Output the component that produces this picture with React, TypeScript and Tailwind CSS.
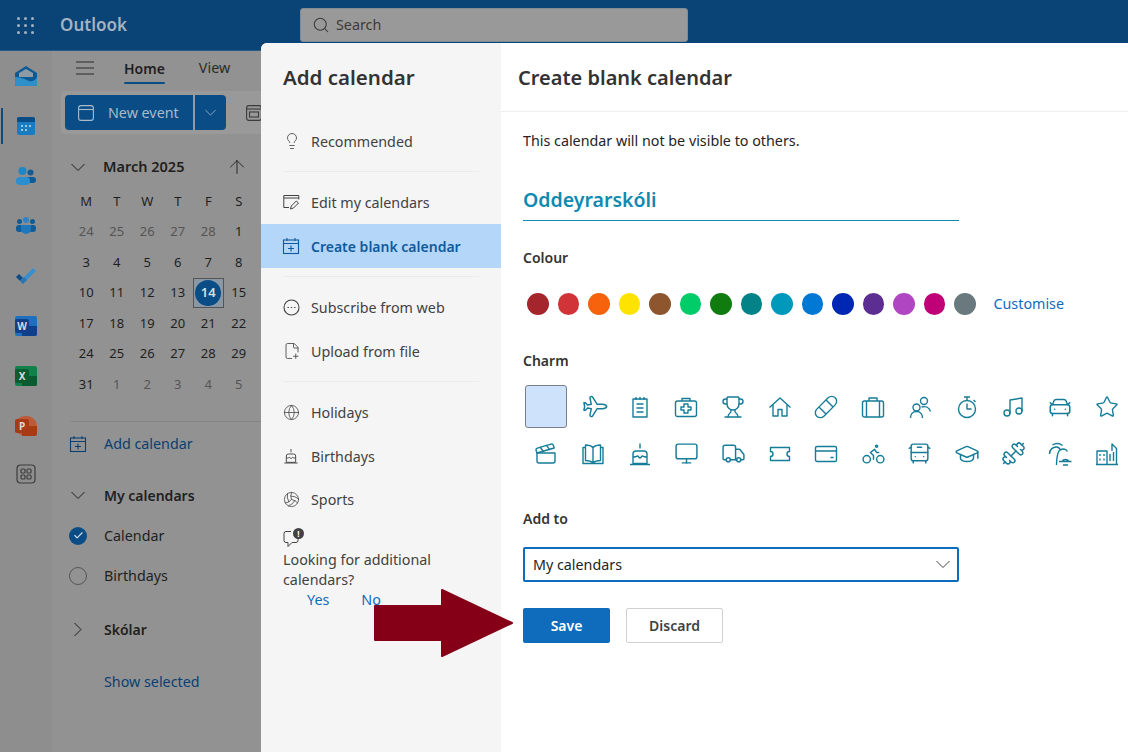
import {
  ArrowUp, Bike, BusFront, CarFront, Check, Clapperboard,
  Dumbbell, FilePlus2, Globe, GraduationCap, Lightbulb, Monitor, Music, Plane, Search, Star, Trophy, Truck,
  Volleyball,
} from "lucide-react";

const weeks = [
  ["24", "25", "26", "27", "28", "1", "2"],
  ["3", "4", "5", "6", "7", "8", "9"],
  ["10", "11", "12", "13", "14", "15", "16"],
  ["17", "18", "19", "20", "21", "22", "23"],
  ["24", "25", "26", "27", "28", "29", "30"],
  ["31", "1", "2", "3", "4", "5", "6"],
];

const colours = [
  "bg-[#a4262c]", "bg-[#d13438]", "bg-[#f7630c]", "bg-[#ffe300]", "bg-[#8e562e]",
  "bg-[#00cc6a]", "bg-[#107c10]", "bg-[#038387]", "bg-[#0099bc]", "bg-[#0078d4]",
  "bg-[#0027b4]", "bg-[#5c2e91]", "bg-[#b146c2]", "bg-[#bf0077]", "bg-[#69797e]",
];

// charm glyphs that lucide doesn't have in the right shape, 24x24 outlines
const charmPaths: Record<string, React.ReactNode> = {
  notepad: <path d="M5 4h14v18H5zM8 2v3M12 2v3M16 2v3M8.5 9h7M8.5 13h7M8.5 17h7" />,
  medkit: (
    <>
      <rect x="1.5" y="6" width="21" height="15.5" rx="2" />
      <path d="M8 6V3.5h8V6M10 9h4v3h3v3h-3v3h-4v-3H7v-3h3z" />
    </>
  ),
  house: <path d="M1.5 12.5L12 3l10.5 9.5M5 10v11h5v-6.5h4V21h5V10" />,
  bandage: (
    <g transform="rotate(-45 12 12)">
      <rect x="-1" y="7" width="26" height="10" rx="5" />
      <path d="M7 7v10M17 7v10M11 10.5h.1M13 10.5h.1M11 13.5h.1M13 13.5h.1" />
    </g>
  ),
  suitcase: (
    <>
      <rect x="1.5" y="6" width="21" height="16" rx="2" />
      <path d="M8 6V3h8v3M5.5 6v16M18.5 6v16" />
    </>
  ),
  people: (
    <>
      <circle cx="16" cy="6" r="3.5" />
      <circle cx="8.5" cy="12.5" r="3.5" />
      <path d="M2.5 23c0-3.5 2-6.5 6-6.5s6 3 6 6.5M13.5 12c3.5-1 7.5 0 9 4.5" />
    </>
  ),
  timer: (
    <>
      <circle cx="12" cy="14" r="8.5" />
      <path d="M12 8.5V14h4.5M9 2h6M12 2v3.5M18.5 5l2 2" />
    </>
  ),
  book: (
    <>
      <path d="M12 5.5C10 3.5 7 3 4.5 3v15.5c3 0 5.5.5 7.5 2.5 2-2 4.5-2.5 7.5-2.5V3C17 3 14 3.5 12 5.5zM12 5.5V21" />
      <path d="M4.5 5.5H2V21.5h20V5.5h-2.5" />
    </>
  ),
  cake: <path d="M12 1.5v5M5 12a3 3 0 0 1 3-3h8a3 3 0 0 1 3 3v9.5H5zM5 14c2 2.5 3.5 0 4.5 0s1.5 2 2.5 2 1.500-2 2.500-2 2.500 2.500 4.500 0M2 22.500h20" />,
  ticket: <path d="M2.5 5.5h19v4a2.5 2.5 0 0 0 0 5v4h-19v-4a2.5 2.5 0 0 0 0-5z" />,
  card: (
    <>
      <rect x="1.5" y="4.5" width="21" height="15" rx="1.5" />
      <path d="M1.5 9h21M16.5 15.5h3" />
    </>
  ),
  palm: <path d="M8.5 23c0-6 .5-11 3-15M1.5 12c0-4.5 3.5-7.5 7.5-7 2 .3 3 1.5 3.5 3.5M4.5 3c3-2.2 7.5-2 10 .5M12 8c3-1.5 6-1 7.5 1.5M11 19.500h12.500M14 19.500a4 4 0 0 1 7 0M15 23h5" />,
  city: <path d="M2 22.5V9h10v13.5M12 22.5h9.5V6.500L17 2v7M5 12v2M9 12v2M5 16.500v2M9 16.500v2M15 12v7M18.500 10v9M1 22.500h22" />,
};

function Drawn({ name }: { name: string }) {
  return (
    <svg width="24" height="24" viewBox="0 0 24 24" fill="none" stroke="currentColor" strokeWidth="1.4" strokeLinejoin="round">
      {charmPaths[name]}
    </svg>
  );
}

function ChevronWide({ width, className }: { width: number; className?: string }) {
  return (
    <svg width={width} height={width / 2 + 2} viewBox="0 0 14 9" fill="none" stroke="currentColor" strokeWidth="1" className={className}>
      <path d="M.5 1L7 7.500 13.500 1" />
    </svg>
  );
}

const charms: React.ReactNode[] = [
  <Plane size={25} strokeWidth={1.4} className="rotate-45" />,
  <Drawn name="notepad" />,
  <Drawn name="medkit" />,
  <Trophy size={24} strokeWidth={1.4} />,
  <Drawn name="house" />,
  <Drawn name="bandage" />,
  <Drawn name="suitcase" />,
  <Drawn name="people" />,
  <Drawn name="timer" />,
  <Music size={24} strokeWidth={1.4} />,
  <CarFront size={26} strokeWidth={1.4} />,
  <Star size={24} strokeWidth={1.4} />,
  <Clapperboard size={24} strokeWidth={1.4} />,
  <Drawn name="book" />,
  <Drawn name="cake" />,
  <Monitor size={25} strokeWidth={1.4} />,
  <Truck size={25} strokeWidth={1.4} />,
  <Drawn name="ticket" />,
  <Drawn name="card" />,
  <Bike size={25} strokeWidth={1.4} />,
  <BusFront size={25} strokeWidth={1.4} />,
  <GraduationCap size={26} strokeWidth={1.4} />,
  <Dumbbell size={25} strokeWidth={1.4} />,
  <Drawn name="palm" />,
  <Drawn name="city" />,
];

function CalendarPlusIcon({ className }: { className?: string }) {
  return (
    <svg width="18" height="18" viewBox="0 0 18 18" fill="none" stroke="currentColor" strokeWidth="1.1" className={className}>
      <rect x="1.5" y="3" width="15" height="13.5" />
      <path d="M1.5 6.5h15M5 1v3M13 1v3M9 8.5v6M6 11.5h6" />
    </svg>
  );
}

function EditCalendarIcon() {
  return (
    <svg width="17" height="16" viewBox="0 0 17 16" fill="none" stroke="currentColor" strokeWidth="1">
      <path d="M6 13.5H.8V1.5h15v4M.8 4h15" />
      <path d="M7.5 15l.8-3 5-5 2.2 2-5 5z" />
    </svg>
  );
}

function OfficeIcon({ letter, dark, light, round }: { letter: string; dark: string; light: string; round: string }) {
  return (
    <div className={`relative w-[22px] h-[20px] ${light} ${round}`}>
      <div className={`absolute left-[7px] top-[10px] w-[15px] h-[10px] rounded-br-[2px] ${dark}`} />
      <div className={`absolute left-0 top-[3px] w-[14px] h-[14px] rounded-[2px] ${dark} text-[#d8d8d8] text-[10px] font-bold leading-[14px] text-center`}>
        {letter}
      </div>
    </div>
  );
}

function RailIcon({ i }: { i: number }) {
  if (i === 0)
    return (
      <svg width="22" height="20" viewBox="0 0 22 20">
        <path d="M11 0L22 7v11a2 2 0 0 1-2 2H2a2 2 0 0 1-2-2V7z" fill="#0b5a96" />
        <path d="M4 7l7-4 7 4v4H4z" fill="#8f9ba3" />
        <path d="M0 11c7 0 11 3 14 4 3 1 6 0 8-4v7a2 2 0 0 1-2 2H2a2 2 0 0 1-2-2z" fill="#2f8fc9" />
      </svg>
    );
  if (i === 1)
    return (
      <svg width="18" height="18" viewBox="0 0 18 18">
        <rect width="18" height="18" rx="2" fill="#1a7bc0" />
        <path d="M0 2a2 2 0 0 1 2-2h14a2 2 0 0 1 2 2v3H0z" fill="#0a4d86" />
        <path d="M4 8h2v2H4zM8 8h2v2H8zM12 8h2v2h-2zM4 12h2v2H4zM8 12h2v2H8z" fill="#9cc5e3" />
      </svg>
    );
  if (i === 2)
    return (
      <svg width="20" height="18" viewBox="0 0 20 18">
        <circle cx="14.5" cy="5.5" r="3" fill="#0f5c98" />
        <rect x="9" y="10" width="11" height="6" rx="3" fill="#0f5c98" />
        <circle cx="6.5" cy="4" r="4" fill="#1f86c8" />
        <rect x="0" y="10" width="14" height="8" rx="4" fill="#2c8ecf" />
      </svg>
    );
  if (i === 3)
    return (
      <svg width="20" height="18" viewBox="0 0 20 18">
        <circle cx="3.5" cy="4.5" r="2.5" fill="#0f5c98" />
        <circle cx="16.5" cy="4.5" r="2.5" fill="#0f5c98" />
        <rect y="8" width="7" height="7" rx="3" fill="#0f5c98" />
        <rect x="13" y="8" width="7" height="7" rx="3" fill="#0f5c98" />
        <circle cx="10" cy="3" r="3" fill="#2c86c6" />
        <path d="M5 8h10v4a5 5 0 0 1-10 0z" fill="#1f78bb" />
      </svg>
    );
  if (i === 4)
    return (
      <svg width="22" height="18" viewBox="0 0 22 18" fill="none">
        <path d="M1 10l4 4 3-3-4-4z" fill="#0a4d86" />
        <path d="M5 14L18 1l3 3L8 17z" fill="#3a8fcb" />
        <path d="M5 14l4-4 3 3-4 4z" fill="#2c76b0" />
      </svg>
    );
  if (i === 5) return <OfficeIcon letter="W" dark="bg-[#0f3f8a]" light="bg-[#1d6fc0]" round="rounded-[2px]" />;
  if (i === 6) return <OfficeIcon letter="X" dark="bg-[#0a5a32]" light="bg-[#12804a]" round="rounded-[2px]" />;
  if (i === 7) return <OfficeIcon letter="P" dark="bg-[#a83a16]" light="bg-[#bd5a3a]" round="rounded-full" />;
  return (
    <svg width="20" height="20" viewBox="0 0 20 20" fill="none" stroke="#3d3d3d" strokeWidth="1.2">
      <rect x="1" y="1" width="18" height="18" rx="3.5" />
      <rect x="5" y="5" width="4" height="4" rx="1" />
      <rect x="11" y="5" width="4" height="4" rx="1" />
      <rect x="5" y="11" width="4" height="4" rx="1" />
      <rect x="11" y="11" width="4" height="4" rx="1" />
    </svg>
  );
}

function NavItem({ icon, label, active, className }: { icon: React.ReactNode; label: string; active?: boolean; className?: string }) {
  return (
    <div className={`h-[44px] flex items-center pl-[22px] ${active ? "bg-[#b3d6f9] text-[#0f5a9e] font-semibold text-[14px]" : "text-[#424242]"} ${className ?? ""}`}>
      <span className="w-[28px] flex shrink-0">{icon}</span>
      <span className={active ? "" : "pt-[2px]"}>{label}</span>
    </div>
  );
}

function Divider() {
  return <div className="mx-[22px] my-[8px] h-px bg-[#ebebeb]" />;
}

export default function App() {
  return (
    <div className="relative w-[1128px] h-[752px] overflow-hidden flex flex-col bg-[#929292] text-[14.3px] font-['Noto_Sans',sans-serif]">
      <header className="h-[51px] shrink-0 flex items-center bg-[#0a4375] border-b border-[#2a5c88]">
        <div className="w-[60px] pl-[17px]">
          <div className="grid grid-cols-3 gap-[4px] w-[17px]">
            {Array.from({ length: 9 }).map((_, i) => (
              <span key={i} className="w-[3px] h-[3px] rounded-full bg-[#a3b3c2]" />
            ))}
          </div>
        </div>
        <span className="w-[240px] text-[17px] font-semibold text-[#a3b3c2]">Outlook</span>
        <div className="w-[388px] h-[34px] flex items-center gap-[6px] pl-[11px] rounded-[3px] bg-[#999999] border border-[#7f8b95] text-[#3b3b3b]">
          <Search size={18} strokeWidth={1.4} />
          <span>Search</span>
        </div>
      </header>

      <div className="flex-1 flex min-h-0">
        <nav className="relative w-[52px] shrink-0 bg-[#8e8e8e]">
          <div className="absolute left-[1px] top-[57px] w-[2px] h-[36px] bg-[#0a4d86]" />
          {Array.from({ length: 9 }).map((_, i) => (
            <div key={i} className={`flex items-center justify-center ${i === 8 ? "h-[46px]" : "h-[50px]"}`}>
              <RailIcon i={i} />
            </div>
          ))}
        </nav>

        <div className="flex-1 min-w-0 text-[#1f1f1f]">
          <div className="h-[40px] flex items-center pl-[24px] pb-[6px]">
            <svg width="18" height="14" viewBox="0 0 18 14" fill="none" stroke="#2b2b2b" strokeWidth="1.2">
              <path d="M0 1h18M0 7h18M0 13h18" />
            </svg>
            <div className="ml-[30px] relative h-full flex items-center font-semibold text-[14px]">
              Home
              <div className="absolute left-0 right-0 bottom-[1px] h-[2px] rounded-full bg-[#0a4d86]" />
            </div>
            <span className="ml-[34px] text-[#2b2b2b]">View</span>
          </div>

          <div className="ml-[9px] h-[43px] flex items-center pl-[4px] gap-[2px] rounded-l-[4px] bg-[#999999]">
            <div className="w-[128px] h-[35px] flex items-center pl-[13px] gap-[14px] rounded-l-[4px] bg-[#0a4d86] text-[#a9bacb]">
              <svg width="16" height="16" viewBox="0 0 16 16" fill="none" stroke="currentColor" strokeWidth="1.1">
                <rect x=".6" y=".6" width="14.8" height="14.8" rx="2.5" />
                <path d="M.6 4.5h14.8" />
              </svg>
              New event
            </div>
            <div className="w-[31px] h-[35px] flex items-center justify-center rounded-r-[4px] bg-[#0a4d86] text-[#a9bacb]">
              <ChevronWide width={11} />
            </div>
            <svg width="16" height="16" viewBox="0 0 16 16" fill="none" stroke="#3b3b3b" strokeWidth="1.1" className="ml-[18px]">
              <rect x=".6" y=".6" width="14.8" height="14.8" rx="2.5" />
              <path d="M.6 4h14.8" />
              <rect x="3.5" y="7" width="9" height="5" />
            </svg>
          </div>

          <div className="ml-[19px] mt-[21px] h-[24px] flex items-center">
            <ChevronWide width={14} />
            <span className="ml-[18px] font-semibold text-[14.5px]">March 2025</span>
            <ArrowUp size={22} strokeWidth={1} className="ml-[42px]" />
          </div>

          <div className="ml-[19px] mt-[7px] grid grid-cols-[repeat(7,30.5px)] auto-rows-[30.5px] text-center text-[13px]">
            {["M", "T", "W", "T", "F", "S", "S"].map((d, i) => (
              <div key={i} className="flex items-center justify-center">{d}</div>
            ))}
            {weeks.map((week, w) =>
              week.map((d, i) => {
                const outside = (w === 0 && i < 5) || (w === 5 && i > 0);
                if (w === 2 && i === 4)
                  return (
                    <div key={d} className="flex items-center justify-center border border-[#555555] bg-[#8a98a6]">
                      <span className="w-[26px] h-[26px] rounded-full flex items-center justify-center bg-[#0a4d86] font-semibold text-[#d5dde5]">14</span>
                    </div>
                  );
                return (
                  <div key={`${w}-${i}`} className={`flex items-center justify-center ${outside ? "text-[#555555]" : ""}`}>{d}</div>
                );
              }),
            )}
          </div>

          <div className="ml-[19px] mt-[21px] h-px bg-[#838383]" />

          <div className="ml-[17px] mt-[10px] h-[24px] flex items-center gap-[17px] text-[#0b3f70]">
            <CalendarPlusIcon />
            Add calendar
          </div>

          <div className="ml-[17px] mt-[28px] flex flex-col">
            <div className="h-[24px] flex items-center font-semibold text-[14px]">
              <span className="w-[18px] flex justify-center"><ChevronWide width={14} /></span>
              <span className="ml-[17px]">My calendars</span>
            </div>
            <div className="mt-[16px] h-[24px] flex items-center gap-[17px]">
              <span className="w-[18px] h-[18px] rounded-full flex items-center justify-center bg-[#0a4d86] text-[#d5dde5]">
                <Check size={11} strokeWidth={2.5} />
              </span>
              Calendar
            </div>
            <div className="mt-[16px] h-[24px] flex items-center gap-[17px]">
              <span className="w-[18px] h-[18px] rounded-full border border-[#555555]" />
              Birthdays
            </div>
            <div className="mt-[30px] h-[24px] flex items-center font-semibold text-[14px]">
              <span className="w-[18px] flex justify-center"><ChevronWide width={14} className="-rotate-90" /></span>
              <span className="ml-[17px]">Skólar</span>
            </div>
            <div className="mt-[28px] h-[24px] flex items-center pl-[35px] text-[#0b3f70]">Show selected</div>
          </div>
        </div>
      </div>

      {/* Add calendar dialog */}
      <div className="absolute left-[261px] top-[43px] right-0 bottom-0 flex rounded-tl-[6px] overflow-hidden bg-white">
        <aside className="w-[240px] shrink-0 bg-[#f5f5f5] text-[#424242]">
          <div className="h-[76px] flex items-center pl-[22px] pb-[7px] text-[20.5px] font-semibold text-[#333333]">Add calendar</div>
          <NavItem icon={<Lightbulb size={18} strokeWidth={1.1} />} label="Recommended" />
          <Divider />
          <NavItem icon={<EditCalendarIcon />} label="Edit my calendars" />
          <NavItem active icon={<CalendarPlusIcon className="-ml-[1px]" />} label="Create blank calendar" />
          <Divider />
          <NavItem
            label="Subscribe from web"
            icon={
              <svg width="17" height="17" viewBox="0 0 17 17" fill="none" stroke="currentColor" strokeWidth="1.1">
                <circle cx="8.5" cy="8.5" r="7.5" />
                <path d="M4.5 8.5h1.4M7.8 8.5h1.4M11.1 8.5h1.4" />
              </svg>
            }
          />
          <NavItem icon={<FilePlus2 size={18} strokeWidth={1.1} />} label="Upload from file" />
          <Divider />
          <NavItem icon={<Globe size={17} strokeWidth={1.1} />} label="Holidays" />
          <NavItem icon={<Drawn name="cake" />} label="Birthdays" className="[&_svg]:w-[16px] [&_svg]:h-[16px]" />
          <NavItem icon={<Volleyball size={17} strokeWidth={1.1} />} label="Sports" className="-mt-[1px]" />
          <div className="pl-[22px] pt-[8px]">
            <div className="relative w-[21px] h-[20px]">
              <svg width="20" height="20" viewBox="0 0 20 20" fill="none" stroke="#424242" strokeWidth="1">
                <path d="M8 2.5H3a2 2 0 0 0-2 2v7a2 2 0 0 0 2 2h2v4l4-4h4a2 2 0 0 0 2-2V9" />
              </svg>
              <span className="absolute left-[10px] -top-[1px] w-[11px] h-[11px] rounded-full bg-[#424242] text-white text-[8px] font-bold leading-[11px] text-center">!</span>
            </div>
            <p className="mt-[1px] leading-[20px]">
              Looking for additional
              <br />
              calendars?
            </p>
            <div className="flex leading-[20px] text-[#0f6cbd]">
              <span className="ml-[24px]">Yes</span>
              <span className="ml-[32px]">No</span>
            </div>
          </div>
        </aside>

        <main className="flex-1 min-w-0 text-[#242424]">
          <div className="h-[69px] flex items-center pl-[17px] pt-[2px] border-b border-[#eeeeee] text-[20px] font-semibold text-[#333333]">Create blank calendar</div>
          <div className="pl-[22px]">
            <p className="mt-[19px] leading-[20px]">This calendar will not be visible to others.</p>
            <div className="mt-[31px] w-[436px] h-[39px] flex items-center pb-[3px] border-b border-[#0f8ab0] text-[19.5px] font-semibold text-[#0f8ab0]">Oddeyrarskóli</div>
            <div className="mt-[27px] leading-[20px] font-semibold text-[14px] text-[#333333]">Colour</div>
            <div className="mt-[25px] ml-[4px] h-[22px] flex items-center gap-[9px]">
              {colours.map((c) => (
                <span key={c} className={`w-[21.5px] h-[21.5px] rounded-full shrink-0 ${c}`} />
              ))}
              <span className="ml-[9px] text-[#0f6cbd]">Customise</span>
            </div>
            <div className="mt-[36px] leading-[20px] font-semibold text-[14px] text-[#333333]">Charm</div>
            <div className="mt-[12px] grid grid-cols-[repeat(13,46.7px)] auto-rows-[47px] w-[607px]">
              <div className="flex items-center justify-center">
                <span className="w-[42px] h-[43px] rounded-[3px] bg-[#cfe2fb] border border-[#7a7f87]" />
              </div>
              {charms.map((icon, i) => (
                <div key={i} className="flex items-center justify-center text-[#167c98]">{icon}</div>
              ))}
            </div>
            <div className="mt-[32px] leading-[20px] font-semibold text-[14px] text-[#333333]">Add to</div>
            <div className="mt-[18px] w-[436px] h-[35px] flex items-center justify-between pl-[8px] pr-[7px] rounded-[2px] border-2 border-[#0f6cbd]">
              My calendars
              <ChevronWide width={14} className="text-[#424242]" />
            </div>
            <div className="mt-[26px] flex gap-[16px] font-semibold text-[14px]">
              <button className="w-[87px] h-[35px] rounded-[2px] bg-[#0f6cbd] text-white">Save</button>
              <button className="w-[97px] h-[35px] rounded-[2px] border border-[#d1d1d1] text-[#424242]">Discard</button>
            </div>
          </div>
        </main>
      </div>

      {/* Annotation arrow pointing at Save */}
      <svg width="142" height="70" viewBox="0 0 142 70" className="absolute left-[374px] top-[588px]">
        <path d="M1 18H68V2L138 35 68 68V52H1z" fill="#850017" stroke="#850017" strokeWidth="2" strokeLinejoin="round" />
      </svg>
    </div>
  );
}
